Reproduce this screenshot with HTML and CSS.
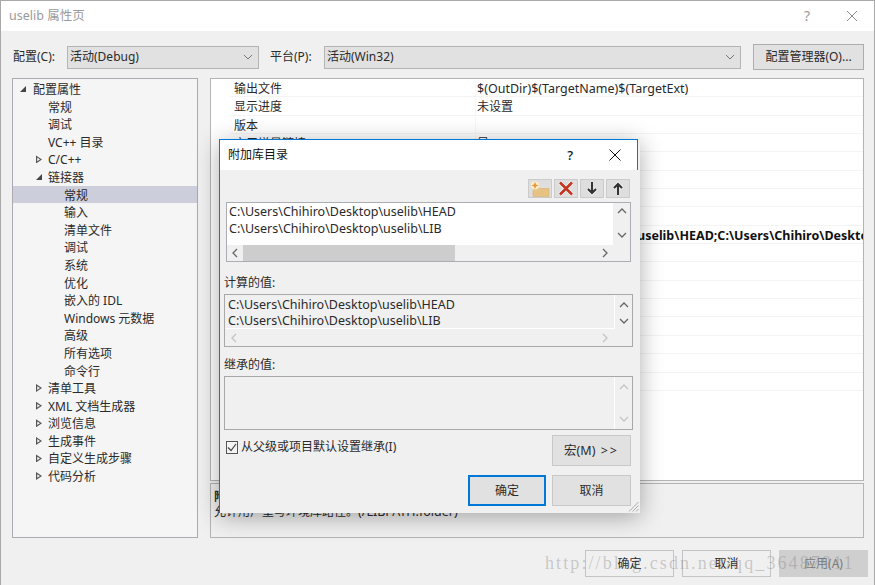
FILE: index.html
```html
<!DOCTYPE html>
<html lang="zh">
<head>
<meta charset="utf-8">
<title>uselib 属性页</title>
<link rel="stylesheet" href="styles.css">
</head>
<body>
<div class="window">
  <header class="titlebar">
    <span class="title">uselib 属性页</span>
    <span class="help">?</span>
    <svg class="close" width="12" height="12" viewBox="0 0 12 12"><path d="M1 1l10 10M11 1L1 11" stroke="#8a8a8a" fill="none"/></svg>
  </header>
  <div class="toolbar">
    <label class="lbl lbl-c">配置(C):</label>
    <div class="combo combo-a"><span>活动(Debug)</span><svg width="10" height="6" viewBox="0 0 10 6"><path d="M1 1l4 4 4-4" stroke="#777" fill="none"/></svg></div>
    <label class="lbl lbl-p">平台(P):</label>
    <div class="combo combo-b"><span>活动(Win32)</span><svg width="10" height="6" viewBox="0 0 10 6"><path d="M1 1l4 4 4-4" stroke="#777" fill="none"/></svg></div>
    <button class="btn btn-mgr">配置管理器(O)...</button>
  </div>
  <main class="main">
    <nav class="tree">
      <div class="node l0"><i class="tri open"></i>配置属性</div>
      <div class="node l1">常规</div>
      <div class="node l1">调试</div>
      <div class="node l1">VC++ 目录</div>
      <div class="node l1"><i class="tri closed"></i>C/C++</div>
      <div class="node l1"><i class="tri open"></i>链接器</div>
      <div class="node l2 sel">常规</div>
      <div class="node l2">输入</div>
      <div class="node l2">清单文件</div>
      <div class="node l2">调试</div>
      <div class="node l2">系统</div>
      <div class="node l2">优化</div>
      <div class="node l2">嵌入的 IDL</div>
      <div class="node l2">Windows 元数据</div>
      <div class="node l2">高级</div>
      <div class="node l2">所有选项</div>
      <div class="node l2">命令行</div>
      <div class="node l1"><i class="tri closed"></i>清单工具</div>
      <div class="node l1"><i class="tri closed"></i>XML 文档生成器</div>
      <div class="node l1"><i class="tri closed"></i>浏览信息</div>
      <div class="node l1"><i class="tri closed"></i>生成事件</div>
      <div class="node l1"><i class="tri closed"></i>自定义生成步骤</div>
      <div class="node l1"><i class="tri closed"></i>代码分析</div>
    </nav>
    <section class="right">
      <div class="grid">
        <div class="row"><span class="k">输出文件</span><span class="v latin">$(OutDir)$(TargetName)$(TargetExt)</span></div>
        <div class="row"><span class="k">显示进度</span><span class="v">未设置</span></div>
        <div class="row"><span class="k">版本</span><span class="v"></span></div>
        <div class="row"><span class="k">启用增量链接</span><span class="v">是 (/INCREMENTAL)</span></div>
        <div class="row"><span class="k">取消启动版权标志</span><span class="v">是 (/NOLOGO)</span></div>
        <div class="row"><span class="k">忽略导入库</span><span class="v">否</span></div>
        <div class="row"><span class="k">注册输出</span><span class="v">否</span></div>
        <div class="row"><span class="k">逐用户重定向</span><span class="v">否</span></div>
        <div class="row"><span class="k">附加库目录</span><span class="v bold">C:\Users\Chihiro\Desktop\uselib\HEAD;C:\Users\Chihiro\Desktop\uselib\LIB;%(AdditionalLibraryDirectories)</span></div>
        <div class="row"><span class="k">链接库依赖项</span><span class="v">是</span></div>
        <div class="row"><span class="k">使用库依赖项输入</span><span class="v">否</span></div>
        <div class="row"><span class="k">链接状态</span><span class="v"></span></div>
        <div class="row"><span class="k">阻止 Dll 绑定</span><span class="v"></span></div>
        <div class="row"><span class="k">将链接器警告视为错误</span><span class="v"></span></div>
        <div class="row"><span class="k">强制文件输出</span><span class="v"></span></div>
        <div class="row"><span class="k">创建可热修补映像</span><span class="v"></span></div>
        <div class="row"><span class="k">指定节特性</span><span class="v"></span></div>
      </div>
      <div class="desc">
        <div class="desc-h">附加库目录</div>
        <div class="desc-t">允许用户重写环境库路径。<span class="latin">(/LIBPATH:folder)</span></div>
      </div>
    </section>
  </main>
  <footer class="footer">
    <button class="btn btn-foot">确定</button>
    <button class="btn btn-foot">取消</button>
    <button class="btn btn-foot disabled">应用(A)</button>
  </footer>
</div>

<div class="dialog">
  <header class="dlg-title">
    <span class="dlg-name">附加库目录</span>
    <span class="dlg-help">?</span>
    <svg class="dlg-close" width="12" height="12" viewBox="0 0 12 12"><path d="M.5.5l11 11M11.500.5l-11 11" stroke="#111" fill="none"/></svg>
  </header>
  <div class="dlg-body">
    <div class="tools">
      <button class="tool"><svg width="20" height="16" viewBox="0 0 20 16"><path d="M3 6h5l1.500 1.500H19V15.500H3z" fill="#e6c284" stroke="#d8b474" stroke-width=".6"/><circle cx="5" cy="4.500" r="4" fill="#fbeec9"/><path d="M5 .8l1.100 2.600 2.600 1.100-2.600 1.100L5 8.200 3.900 5.600 1.300 4.500l2.600-1.100z" fill="#e39a42"/></svg></button>
      <button class="tool"><svg width="16" height="15" viewBox="0 0 16 15"><path d="M2 1.500l12 12M14 1.500l-12 12" stroke="#f4f4f4" stroke-width="4.400" fill="none"/><path d="M2 1.500l12 12M14 1.500l-12 12" stroke="#c4351f" stroke-width="2.600" fill="none"/></svg></button>
      <button class="tool"><svg width="14" height="15" viewBox="0 0 14 15"><path d="M7 1v10M3 8l4 4 4-4" stroke="#f6f6f6" stroke-width="4" fill="none"/><path d="M7 1v10M3 8l4 4 4-4" stroke="#333" stroke-width="2.200" fill="none"/></svg></button>
      <button class="tool"><svg width="14" height="15" viewBox="0 0 14 15"><path d="M7 14V4M3 7l4-4 4 4" stroke="#f6f6f6" stroke-width="4" fill="none"/><path d="M7 14V4M3 7l4-4 4 4" stroke="#333" stroke-width="2.200" fill="none"/></svg></button>
    </div>
    <div class="box box-edit">
      <div class="lines white">
        <div>C:\Users\Chihiro\Desktop\uselib\HEAD</div>
        <div>C:\Users\Chihiro\Desktop\uselib\LIB</div>
      </div>
      <div class="vs">
        <svg width="10" height="6" viewBox="0 0 10 6"><path d="M1 5l4-4 4 4" stroke="#666" stroke-width="1.300" fill="none"/></svg>
        <svg width="10" height="6" viewBox="0 0 10 6"><path d="M1 1l4 4 4-4" stroke="#666" stroke-width="1.300" fill="none"/></svg>
      </div>
      <div class="hs">
        <svg width="6" height="10" viewBox="0 0 6 10"><path d="M5 1L1 5l4 4" stroke="#666" stroke-width="1.300" fill="none"/></svg>
        <div class="track"><div class="thumb"></div></div>
        <svg width="6" height="10" viewBox="0 0 6 10"><path d="M1 1l4 4-4 4" stroke="#666" stroke-width="1.300" fill="none"/></svg>
      </div>
    </div>
    <div class="cap cap-1">计算的值:</div>
    <div class="box box-ro box-calc">
      <div class="lines">
        <div>C:\Users\Chihiro\Desktop\uselib\HEAD</div>
        <div>C:\Users\Chihiro\Desktop\uselib\LIB</div>
      </div>
      <div class="vs vs-calc">
        <svg width="10" height="6" viewBox="0 0 10 6"><path d="M1 5l4-4 4 4" stroke="#666" stroke-width="1.300" fill="none"/></svg>
        <svg width="10" height="6" viewBox="0 0 10 6"><path d="M1 1l4 4 4-4" stroke="#666" stroke-width="1.300" fill="none"/></svg>
      </div>
      <div class="hs hs-calc">
        <svg width="6" height="10" viewBox="0 0 6 10"><path d="M5 1L1 5l4 4" stroke="#c4c4c4" stroke-width="1.300" fill="none"/></svg>
        <div class="track"></div>
        <svg width="6" height="10" viewBox="0 0 6 10"><path d="M1 1l4 4-4 4" stroke="#c4c4c4" stroke-width="1.300" fill="none"/></svg>
      </div>
    </div>
    <div class="cap cap-2">继承的值:</div>
    <div class="box box-ro box-inh">
      <div class="lines"></div>
      <div class="vs vs-inh">
        <svg width="10" height="6" viewBox="0 0 10 6"><path d="M1 5l4-4 4 4" stroke="#c4c4c4" stroke-width="1.300" fill="none"/></svg>
        <svg width="10" height="6" viewBox="0 0 10 6"><path d="M1 1l4 4 4-4" stroke="#c4c4c4" stroke-width="1.300" fill="none"/></svg>
      </div>
    </div>
    <div class="opt-row">
      <label class="check"><span class="cb"><svg width="10" height="9" viewBox="0 0 10 9"><path d="M1 4.500l3 3 5-6.500" stroke="#444" stroke-width="1.200" fill="none"/></svg></span>从父级或项目默认设置继承(I)</label>
      <button class="btn btn-dlg btn-macro">宏(M) <span class="gt">&gt;&gt;</span></button>
    </div>
    <div class="act-row">
      <button class="btn btn-dlg btn-ok">确定</button>
      <button class="btn btn-dlg">取消</button>
    </div>
    <svg class="grip" width="11" height="11" viewBox="0 0 11 11"><path d="M10.500 1L1 10.500M10.500 4.500L4.500 10.500M10.500 8L8 10.500" stroke="#a8a8a8" fill="none"/></svg>
  </div>
</div>

<div class="watermark">http://blog.csdn.net/qq_36487911</div>
</body>
</html>
```

FILE: styles.css
```css
* { box-sizing: border-box; }
html, body { margin: 0; padding: 0; }
body {
  width: 875px; height: 585px; overflow: hidden; position: relative;
  font: 12px/16px "Noto Sans", "Noto Sans CJK SC", sans-serif;
  color: #2a2a2a; background: #f0f0f0;
}
button { font: inherit; color: inherit; padding: 0; }

.window {
  width: 875px; height: 585px; display: flex; flex-direction: column;
  border: 1px solid #a9a9a9; border-bottom: 0;
}
.titlebar {
  height: 30px; flex: none; background: #fff; display: flex; align-items: center;
  padding: 0 16px 0 8px; color: #9a9a9a;
}
.title { font-size: 12.5px; flex: 1; }
.help { margin-right: 36px; font-size: 14px; }

.toolbar { height: 47px; flex: none; display: flex; align-items: center; padding: 5px 10px 0 12px; }
.lbl-c { width: 54px; }
.lbl-p { width: 54px; margin-left: 11px; }
.combo {
  height: 23px; background: #e1e1e1; border: 1px solid #b4b4b4;
  display: flex; align-items: center; justify-content: space-between; padding: 0 5px 0 2px;
}
.combo-a { width: 192px; }
.combo-b { width: 417px; }
.btn { background: #e1e1e1; border: 1px solid #adadad; display: block; text-align: center; }
.btn-mgr { width: 111px; height: 26px; margin-left: 12px; }

.main { height: 461px; flex: none; display: flex; padding: 0 10px 0 11px; gap: 12px; }
.tree { width: 187px; height: 460px; background: #f5f5f5; border: 1px solid #aaaab0; padding-top: 1px; }
.node { height: 17.6px; line-height: 19px; position: relative; white-space: nowrap; }
.l0 { padding-left: 20px; }
.l1 { padding-left: 35px; }
.l2 { padding-left: 51px; }
.sel { background: #cccedb; }
.tri { position: absolute; top: 5px; width: 0; height: 0; }
.l0 .tri { left: 7px; }
.l1 .tri { left: 23px; }
.tri.open { border-left: 6px solid transparent; border-bottom: 6px solid #444; margin-top: 1px; }
.tri.closed {
  width: 6px; height: 8px; background: #555;
  clip-path: polygon(0 0, 100% 50%, 0 100%, 0 0, 1.200px 2.200px, 1.200px 5.800px, 4px 4px, 1.200px 2.200px);
}

.right { width: 654px; height: 460px; display: flex; flex-direction: column; gap: 2px; }
.grid { height: 403px; flex: none; background: #fff; border: 1px solid #b4b4b4; overflow: hidden; padding-left: 19px; }
.row { height: 18.350px; display: flex; border-bottom: 1px solid #f4f4f4; padding-top: 1px; line-height: 18.500px; white-space: nowrap; }
.k { width: 246px; padding-left: 4px; border-right: 1px solid #f6f6f6; flex: none; }
.v { padding-left: 1px; }
.latin { font-size: 12.5px; }
.bold { font-weight: 700; color: #111; font-size: 12.5px; margin-left: -4px; }
.desc { height: 55px; flex: none; border: 1px solid #b4b4b4; padding: 3px 3px; overflow: hidden; }
.desc-h { font-weight: 700; height: 16px; line-height: 20px; }
.desc-t { margin-top: 1px; }

.footer { height: 46px; flex: none; display: flex; gap: 8px; padding: 11px 6px 0 0; justify-content: flex-end; }
.btn-foot { width: 89px; height: 27px; background: #f0f0f0; border-color: #c4c4c4; }
.btn-foot.disabled { background: #cfcfcf; border-color: #cfcfcf; color: #7a7a7a; }

.dialog {
  position: absolute; left: 219px; top: 139px; width: 421px; height: 374px;
  background: #f0f0f0; border-left: 1px solid #0078d7;
  box-shadow: 0 4px 22px rgba(0, 0, 0, .32); display: flex; flex-direction: column;
}
.dlg-title {
  height: 31px; flex: none; margin-right: 2px; background: #fff;
  border-top: 1px solid #0078d7; border-right: 1px solid #0078d7;
  display: flex; align-items: center; padding-left: 8px; color: #111;
}
.dlg-name { flex: 1; }
.dlg-help { margin-right: 36px; font-size: 13px; font-weight: 500; }
.dlg-close { margin-right: 16px; }
.dlg-body { flex: 1; position: relative; padding: 9px 0 0 4px; display: flex; flex-direction: column; }

.tools { display: flex; gap: 2px; justify-content: flex-end; height: 19px; padding-right: 10px; }
.tool {
  width: 24px; height: 19px; background: #dedede; border: 1px solid #cbcbcb;
  display: flex; align-items: center; justify-content: center;
}
.box { border: 1px solid #a8a8a8; display: grid; grid-template-columns: 1fr 17px; }
.box-edit {
  width: 405px; height: 60px; margin: 4px 0 0 2px;
  grid-template-rows: 42px 16px; background: #f0f0f0; border-color: #abadb3;
}
.lines { padding: 1px 0 0 2px; overflow: hidden; font-size: 12.5px; }
.lines div { height: 16.5px; white-space: nowrap; }
.white { background: #fff; padding-top: 1px; }
.vs { display: flex; flex-direction: column; align-items: center; padding-top: 5px; gap: 18px; }
.hs { grid-column: 1 / 3; display: flex; align-items: center; padding: 0 22px 0 5px; }
.track { flex: 1; height: 100%; margin: 0 4px 0 5px; }
.thumb { width: 212px; height: 100%; background: #cdcdcd; }

.cap { height: 16px; }
.cap-1 { margin-top: 13px; }
.cap-2 { margin-top: 10px; }
.box-ro { width: 409px; background: #f0f0f0; }
.box-calc { height: 53px; margin-top: 3px; grid-template-rows: 34px 17px; }
.box-calc .lines { border-bottom: 1px solid #fff; border-right: 1px solid #fff; padding: 2px 0 0 3px; }
.box-calc .lines div { height: 16px; }
.vs-calc { padding-top: 7px; gap: 10px; }
.hs-calc { padding: 0 24px 0 6px; grid-column: 1 / 3; }
.box-inh { height: 54px; margin-top: 3px; }
.box-inh .lines { border-right: 1px solid #fff; }
.vs-inh { padding-top: 7px; gap: 26px; }

.opt-row { display: flex; justify-content: space-between; align-items: flex-start; margin-top: 5px; padding: 0 9px 0 2px; }
.check { display: flex; align-items: center; gap: 3px; margin-top: 4px; }
.cb {
  width: 12px; height: 13px; border: 1px solid #555; background: #f4f4f4;
  display: flex; align-items: center; justify-content: center;
}
.btn-dlg { width: 79px; height: 31px; border-color: #c8c8c8; }
.btn-macro { font-size: 12.5px; }
.gt { letter-spacing: 2px; margin-left: 2px; }
.act-row { display: flex; gap: 6px; justify-content: flex-end; margin-top: 9px; padding-right: 9px; }
.btn-ok { width: 78px; border: 2px solid #0078d7; }
.grip { position: absolute; right: 1px; bottom: 1px; }

.watermark {
  position: absolute; left: 545px; top: 553px; white-space: nowrap;
  font: 18px/20px "Liberation Serif", serif; letter-spacing: 2.100px;
  color: rgba(130, 130, 130, .38);
}
```
